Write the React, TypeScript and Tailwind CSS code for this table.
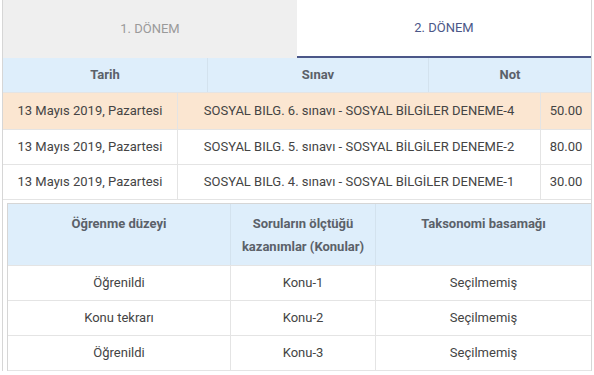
const exams = [
  { date: "13 Mayıs 2019, Pazartesi", exam: "SOSYAL BILG. 6. sınavı - SOSYAL BİLGİLER DENEME-4", score: "50.00", active: true },
  { date: "13 Mayıs 2019, Pazartesi", exam: "SOSYAL BILG. 5. sınavı - SOSYAL BİLGİLER DENEME-2", score: "80.00" },
  { date: "13 Mayıs 2019, Pazartesi", exam: "SOSYAL BILG. 4. sınavı - SOSYAL BİLGİLER DENEME-1", score: "30.00" },
];

const topics = [
  { level: "Öğrenildi", topic: "Konu-1", tax: "Seçilmemiş" },
  { level: "Konu tekrarı", topic: "Konu-2", tax: "Seçilmemiş" },
  { level: "Öğrenildi", topic: "Konu-3", tax: "Seçilmemiş" },
];

export default function App() {
  return (
    <div
      className="h-[375px] w-[594px] overflow-hidden bg-white text-[13px] text-[#444]"
      style={{ fontFamily: "Roboto, 'Liberation Sans', sans-serif" }}
    >
      <div className="ml-[2px] w-[590px] border-x border-[#d6d6d6]">
        {/* tabs */}
        <div className="flex h-[58px]">
          <div className="flex w-[294px] items-center justify-center bg-[#efefef] text-[#9a9a9a]">1. DÖNEM</div>
          <div className="flex flex-1 items-center justify-center border-b-2 border-[#4b5788] text-[#4b5788]">2. DÖNEM</div>
        </div>

        {/* exam header */}
        <div className="flex h-[34px] bg-[#deeefb] font-bold text-[#5b6169]">
          <div className="flex w-[205px] items-center justify-center border-r border-[#d3e2ee]">Tarih</div>
          <div className="flex w-[221px] items-center justify-center border-r border-[#d3e2ee]">Sınav</div>
          <div className="flex flex-1 items-center justify-center">Not</div>
        </div>

        {exams.map((r, i) => (
          <div
            key={i}
            className={`flex h-[35px] border-b border-[#e4e4e4] ${r.active ? "h-[38px] border-t bg-[#fbe6d1]" : ""}`}
          >
            <div className="flex w-[175px] items-center justify-center border-r border-[#e4e4e4]">{r.date}</div>
            <div className="flex w-[363px] items-center justify-center border-r border-[#e4e4e4]">{r.exam}</div>
            <div className="flex flex-1 items-center justify-center">{r.score}</div>
          </div>
        ))}

        {/* topics table */}
        <div className="ml-[4px] mt-[3px] border-l border-t border-[#d6d6d6]">
          <div className="flex h-[61px] bg-[#deeefb] font-bold leading-[23px] text-[#5b6169]">
            <div className="w-[223px] border-r border-[#d3e2ee] pt-[8px] text-center">Öğrenme düzeyi</div>
            <div className="w-[145px] border-r border-[#d3e2ee] pt-[8px] text-center">
              Soruların ölçtüğü
              <br />
              kazanımlar (Konular)
            </div>
            <div className="flex-1 pt-[8px] text-center">Taksonomi basamağı</div>
          </div>
          {topics.map((t, i) => (
            <div key={i} className="flex h-[35px] border-t border-[#e4e4e4]">
              <div className="flex w-[223px] items-center justify-center border-r border-[#e4e4e4]">{t.level}</div>
              <div className="flex w-[145px] items-center justify-center border-r border-[#e4e4e4]">{t.topic}</div>
              <div className="flex flex-1 items-center justify-center">{t.tax}</div>
            </div>
          ))}
          <div className="border-t border-[#e4e4e4]" />
        </div>
      </div>
    </div>
  );
}
